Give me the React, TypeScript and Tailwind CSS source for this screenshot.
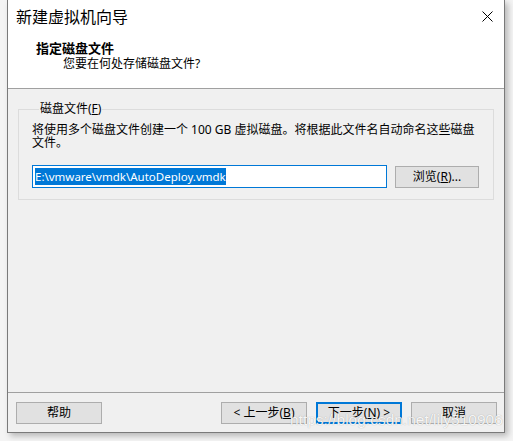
import React from "react";

const font = { fontFamily: '"Noto Sans", "Noto Sans CJK SC", sans-serif' };

function Btn({ children, primary }: { children: React.ReactNode; primary?: boolean }) {
  return (
    <div
      className={
        "w-[86px] h-[22px] flex items-center justify-center bg-[#e1e1e1] text-[12px] text-black " +
        (primary ? "border-2 border-[#0078d7]" : "border border-[#adadad]")
      }
    >
      {children}
    </div>
  );
}

export default function App() {
  return (
    <div className="relative w-[513px] h-[441px] bg-[#f4f4f4] overflow-hidden" style={font}>
      <div className="ml-[7px] w-[498px] h-[433px] flex flex-col border-x border-b border-[#7a7a7a] bg-white shadow-[3px_3px_6px_rgba(0,0,0,0.25)]">
        {/* title bar */}
        <div className="h-[32px] flex items-center justify-between pl-[8px] pr-[10px]">
          <span className="text-[16px] leading-[18px] text-black" style={{ fontFamily: '"Noto Sans CJK SC", sans-serif' }}>
            新建虚拟机向导
          </span>
          <svg width="11" height="11" viewBox="0 0 11 11" className="mr-[1px]">
            <path d="M0.5 0.5 L10.5 10.5 M10.5 0.5 L0.5 10.5" stroke="#000" strokeWidth="1" />
          </svg>
        </div>
        {/* header */}
        <div className="h-[57px] pl-[28px] pt-[8px] border-b border-[#a0a0a0]">
          <div className="text-[13px] leading-[16px] font-bold text-black">指定磁盘文件</div>
          <div className="pl-[27px] text-[12px] leading-[16px] text-black">您要在何处存储磁盘文件?</div>
        </div>
        {/* body */}
        <div className="flex-1 bg-[#f0f0f0] px-[10px] pt-[12px]">
          <fieldset className="border border-[#dcdcdc] pl-[13px] pr-[14px] pb-[11px]">
            <legend className="ml-[7px] px-[1px] text-[12px] leading-[16px] text-black">
              磁盘文件(<span className="underline">F</span>)
            </legend>
            <div className="mt-[7px] text-[12px] leading-[12.5px] text-black">
              将使用多个磁盘文件创建一个 100 GB 虚拟磁盘。将根据此文件名自动命名这些磁盘文件。
            </div>
            <div className="mt-[16px] flex items-center gap-[8px]">
              <div className="w-[355px] h-[23px] border border-[#0078d7] bg-white flex items-center pl-[2px]">
                <span className="bg-[#0078d7] text-white text-[11.5px] leading-[17px]">
                  E:\vmware\vmdk\AutoDeploy.vmdk
                </span>
              </div>
              <div className="w-[84px] h-[22px] border border-[#adadad] bg-[#e1e1e1] flex items-center justify-center text-[12px] text-black">
                浏览(<span className="underline">R</span>)...
              </div>
            </div>
          </fieldset>
        </div>
        {/* footer */}
        <div className="h-[40px] bg-[#f0f0f0] border-t border-[#a0a0a0] flex items-start pt-[9px] pl-[8px] pr-[7px]">
          <Btn>帮助</Btn>
          <div className="ml-auto flex gap-[9px]">
            <Btn>
              &lt; 上一步(<span className="underline">B</span>)
            </Btn>
            <Btn primary>
              下一步(<span className="underline">N</span>) &gt;
            </Btn>
            <Btn>取消</Btn>
          </div>
        </div>
      </div>
      <div
        className="absolute left-[290px] top-[410px] text-[15.5px] leading-[20px] text-white/90 whitespace-nowrap"
        style={{ fontFamily: '"Liberation Sans", sans-serif', textShadow: "0 0 1px rgba(0,0,0,0.35)" }}
      >
        https://blog.csdn.net/lily510906
      </div>
    </div>
  );
}
